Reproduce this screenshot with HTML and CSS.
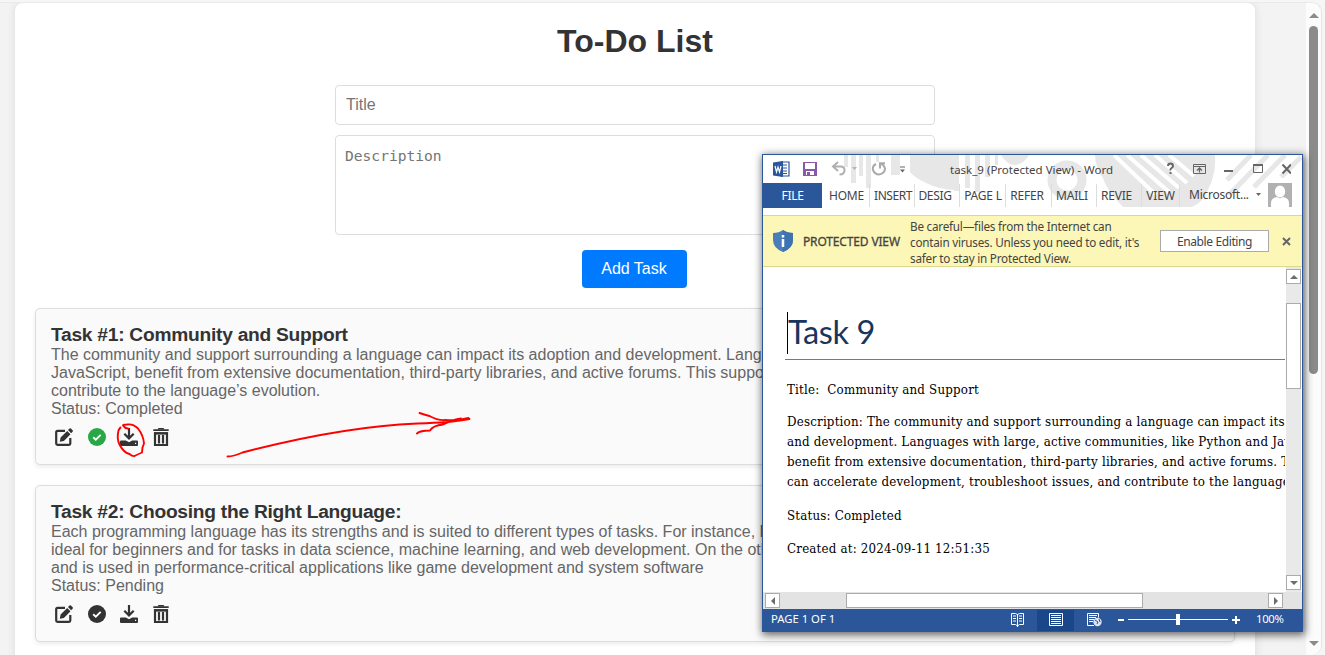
FILE: index.html
```html
<!DOCTYPE html>
<html lang="en">
<head>
<meta charset="utf-8">
<title>To-Do List</title>
<link rel="stylesheet" href="styles.css">
</head>
<body>
<svg width="0" height="0" class="defs">
  <symbol id="edit" viewBox="0 0 18 18"><path d="M10 2.900H2.500Q1.200 2.900 1.200 4.200V15.600Q1.200 16.900 2.500 16.900H14Q15.300 16.900 15.300 15.600V10" fill="none" stroke="currentColor" stroke-width="2.200"/><path d="M4.800 13.700l.8-4.200L12.200 2.900l3.300 3.300-6.600 6.700zM13 2.100l1.500-1.500q.7-.7 1.400 0l1.700 1.700q.7.7 0 1.400l-1.500 1.500z" fill="currentColor"/></symbol>
  <symbol id="check" viewBox="0 0 18 18"><circle cx="9" cy="9" r="9" fill="currentColor"/><path d="M5.200 9.200l2.600 2.400 4.900-4.700" fill="none" stroke="#fff" stroke-width="1.900"/></symbol>
  <symbol id="download" viewBox="0 0 18 18"><path d="M9 0v10M4.300 5.700L9 10.400l4.700-4.700" fill="none" stroke="currentColor" stroke-width="2.200"/><path d="M1 12.500h4.800L9 14.300 12.200 12.500H17q1 0 1 1v3.500q0 1-1 1H1q-1 0-1-1v-3.500q0-1 1-1z" fill="currentColor"/><path d="M15 15.300h1.200" stroke="#fafafa" stroke-width="1.200"/></symbol>
  <symbol id="trash" viewBox="0 0 16 18"><path d="M.3 2.100H15.700" stroke="currentColor" stroke-width="1.800"/><path d="M4.500 1.500L5.500 0h5l1 1.500z" fill="currentColor"/><path d="M2 5.300V17H14V5.300zM6 7v8.500M10 7v8.500" fill="none" stroke="currentColor" stroke-width="2.200"/><path d="M1 4.300H15V6.200H1z" fill="currentColor"/></symbol>
</svg>

<div class="browser">
  <div class="viewport">
    <main class="container">
      <h1>To-Do List</h1>
      <form class="form">
        <input class="field" type="text" placeholder="Title">
        <textarea class="field area" placeholder="Description"></textarea>
        <button class="add" type="button">Add Task</button>
      </form>
      <section class="task">
        <h3>Task #1: Community and Support</h3>
        <p>The community and support surrounding a language can impact its adoption and development. Languages<br>JavaScript, benefit from extensive documentation, third-party libraries, and active forums. This support<br>contribute to the language’s evolution.</p>
        <p>Status: Completed</p>
        <div class="actions"><svg class="ic"><use href="#edit"/></svg><svg class="ic done"><use href="#check"/></svg><svg class="ic"><use href="#download"/></svg><svg class="ic bin"><use href="#trash"/></svg></div>
      </section>
      <section class="task">
        <h3 class="wide">Task #2: Choosing the Right Language:</h3>
        <p>Each programming language has its strengths and is suited to different types of tasks. For instance, Python<br>ideal for beginners and for tasks in data science, machine learning, and web development. On the other<br>and is used in performance-critical applications like game development and system software</p>
        <p>Status: Pending</p>
        <div class="actions"><svg class="ic"><use href="#edit"/></svg><svg class="ic"><use href="#check"/></svg><svg class="ic"><use href="#download"/></svg><svg class="ic bin"><use href="#trash"/></svg></div>
      </section>
    </main>
    <div class="page-scroll"><i class="tri up"></i><div class="page-thumb"></div><i class="tri down"></i></div>
  </div>
</div>

<svg class="ink" viewBox="0 0 1325 655"><g fill="none" stroke="#f00" stroke-width="1.900" stroke-linecap="round" stroke-linejoin="round"><path d="M120.500 427.500q-1 1-2 3q-2 8 1 14q4 8 10 9.500q3 2.500 5 2q4-2 7.500-3.500l.5-5l1.500-4q-.5-8-6-15q-5-5-11-4q-6 0-3 2q1 2 4 2"/><path d="M227.500 456.500q6 0 15-4q100-26 175-29q35-1 52-4.500M419.500 413q6 2 10 3q9 5 16 4q12 1 23-2M417 433.500q3-3 13-3q3-5 13-6q10-5 18-6"/></g></svg>

<div class="word">
  <svg class="pattern" viewBox="0 0 539 61"><g fill="#e7e7e7"><path d="M81 0h4v12h-4zM88 0h5v28h-5zM96 0h4v21h-4zM103 0h5v33h-5zM113 0h3v7h-3zM128 0h9v20h-9zM147 0h44v35q-16-1-28-7q-11-5-16-11zM191 0h5v36h-5zM202 0h5v33h-5zM212 0h5v37h-5zM222 0h5v22h-5zM232 0h3v10h-3zM238 0q6 10 14 10t14-10zM332 0H452q2 24-13 45q-7 7-12 7H360q-17-18-20-29q-7-8-8-23z"/></g><circle cx="304" cy="25" r="15" fill="none" stroke="#e7e7e7" stroke-width="9"/><path d="M351 0l42 40M364 0l42 37M378 0l38 33M392 0l32 28M406 0l25 21" stroke="#fff" stroke-width="4"/><g stroke="#e7e7e7" stroke-width="5"><path d="M464 25L488 0M466 40L505 0M491 32L522 0M518 22L538 2"/></g></svg>
  <div class="titlebar">
    <svg class="qat" viewBox="0 0 150 18"><path d="M8 2h8v14H8z" fill="#fff" stroke="#2b579a" stroke-width="1.200"/><path d="M10 5h4M10 8h4M10 11h4M10 13.500h4" stroke="#2b579a"/><path d="M0 2.500L10 1v16L0 15.500z" fill="#2b579a"/><path d="M2 6l1.500 6L5 7l1.500 5L8 6" fill="none" stroke="#fff" stroke-width="1.200"/><path d="M30 2h14v14H30z" fill="#8b57a8"/><path d="M32 3h10v6H32zM33 11h8v4H33z" fill="#fff"/><path d="M34 12h3v3h-3z" fill="#8b57a8"/><path d="M65 2l-5 4.500 5 4.500M60.500 6.500h7q4 0 4 3.500q0 4.500-5 4.500" fill="none" stroke="#b0b0b0" stroke-width="2"/><path d="M79 7h5l-2.500 3z" fill="#b5b5b5"/><path d="M103 4q-4 2-3 6q2 4.500 6 4.500q6-1 6-6q-1-4-5-5M107 8.500V3.200h5" fill="none" stroke="#aaa" stroke-width="2"/><path d="M127 7h5" stroke="#666"/><path d="M127 9.500h5l-2.500 3z" fill="#666"/></svg>
    <span class="caption">task_9 (Protected View) - Word</span>
    <svg class="controls" viewBox="0 0 126 18"><path d="M3 6q0-2.500 2.500-2.500T8 6q0 1.500-1.500 2.200T5.500 10.500M5.500 12v2" fill="none" stroke="#666" stroke-width="1.900"/><path d="M28.500 4.500h12v9h-12zM28.500 6.500h12" fill="none" stroke="#666"/><path d="M34.500 12.500V8M32 10.500l2.500-2.500 2.500 2.500" fill="none" stroke="#666" stroke-width="1.300"/><path d="M59 11h9" stroke="#666" stroke-width="2"/><path d="M88.500 4.500h9v8h-9z" fill="none" stroke="#666"/><path d="M88 5h10" stroke="#666" stroke-width="2"/><path d="M117.500 4.500l8.500 9M126 4.500l-8.500 9" stroke="#666" stroke-width="2"/></svg>
  </div>
  <div class="tabs">
    <span class="file">FILE</span><span class="tab t1">HOME</span><span class="tab t2">INSERT</span><span class="tab t3">DESIG</span><span class="tab t4">PAGE L</span><span class="tab t5">REFER</span><span class="tab t6">MAILI</span><span class="tab t7">REVIE</span><span class="tab t8">VIEW</span><span class="account">Microsoft...</span>
    <svg class="avatar" viewBox="0 0 36 24"><path d="M0 10h5l-2.500 3z" fill="#666"/><path d="M12 0h24v24H12z" fill="#b1b1b1"/><path d="M24 2.500a4.800 5.500 0 0 1 0 12a4.800 5.500 0 0 1 0-12M15 24v-4q0-5 6-6l3 1.500 3-1.500q6 1 6 6v4z" fill="#fff"/></svg>
  </div>
  <div class="notice">
    <svg class="shield" viewBox="0 0 20 22"><path d="M10 0q4 3 10 3v7q0 8-10 12Q0 18 0 10V3q6 0 10-3z" fill="#4a7ebb"/><path d="M10 0q4 3 10 3v7q0 8-10 12z" fill="#3f73b0"/><path d="M10 5v2.500M10 9v8" stroke="#fff" stroke-width="2.500"/></svg>
    <span class="pv">PROTECTED VIEW</span>
    <p class="warn">Be careful—files from the Internet can<br>contain viruses. Unless you need to edit, it's<br>safer to stay in Protected View.</p>
    <span class="enable">Enable Editing</span>
    <svg class="close" viewBox="0 0 9 9"><path d="M1 1l7 7M8 1L1 8" stroke="#666" stroke-width="2"/></svg>
  </div>
  <div class="body">
    <div class="doc">
      <div class="heading"><i class="caret"></i><span>Task 9</span></div>
      <p class="l1">Title:&nbsp; Community and Support</p>
      <p class="l2">Description: The community and support surrounding a language can impact its<br>and development. Languages with large, active communities, like Python and Jav<br>benefit from extensive documentation, third-party libraries, and active forums. T<br>can accelerate development, troubleshoot issues, and contribute to the language</p>
      <p class="l3">Status: Completed</p>
      <p class="l4">Created at: 2024-09-11 12:51:35</p>
    </div>
    <div class="vs"><div class="sb"><i class="tri up"></i></div><div class="vthumb"></div><div class="sb"><i class="tri down"></i></div></div>
  </div>
  <div class="hs"><div class="sb"><i class="tri left"></i></div><div class="hthumb"></div><div class="sb"><i class="tri right"></i></div></div>
  <div class="status"><span class="pg">PAGE 1 OF 1</span>
    <svg class="views" viewBox="0 0 232 23"><path d="M28 1h37v21H28z" fill="#19478a"/><g fill="none" stroke="#fff"><path d="M2.500 4.500h4l2 1 2-1h4v11h-4l-2 1.500-2-1.500h-4zM8.500 5v13M4 7h3M4 9.500h3M4 12h3M10 7h3M10 9.500h3M10 12h3"/><path d="M40.500 4.500h13v12h-13zM42 6.500h10M42 8.500h10M42 10.500h10M42 12.500h10M42 14.500h10"/><path d="M85 16.500h-6.500v-12h11v4M80 6.500h8M80 8.500h7M80 10.500h5M80 12.500h4"/></g><circle cx="88.500" cy="13" r="4.200" fill="#dbe4f0"/><path d="M86 11l3 2-1 2M90 10l1 3" stroke="#2b579a" fill="none"/><path d="M109 11h6" stroke="#fff" stroke-width="2"/><path d="M119 10.500h100" stroke="#fff"/><path d="M167 5h4v11h-4z" fill="#fff"/><path d="M223 11h8M227 7v8" stroke="#fff" stroke-width="2"/></svg>
    <span class="zoom">100%</span></div>
</div>
</body>
</html>
```
FILE: styles.css
```css
* { box-sizing: border-box; }
body { margin: 0; width: 1325px; height: 655px; overflow: hidden; background: #f6f6f6; font-family: "Liberation Sans", Arial, sans-serif; }
h1, h3, p { margin: 0; }
svg { display: block; flex: none; }
.defs { position: absolute; }
.browser { height: 655px; padding: 2px 3px 0 0; }
.viewport { display: flex; height: 653px; border-top: 1px solid #eaeaea; border-right: 1px solid #e4e4e4; border-radius: 0 10px 10px 0; background: #f3f3f3; overflow: hidden; padding-left: 15px; }
.container { width: 1240px; height: 720px; flex: none; background: #fff; border-radius: 8px; padding: 20px; box-shadow: 0 0 10px rgba(0,0,0,.1); }
h1 { font-size: 32px; line-height: 36px; text-align: center; color: #333; }
.form { width: 600px; margin: 26px auto 20px; display: flex; flex-direction: column; align-items: center; }
.field { display: block; width: 600px; height: 40px; border: 1px solid #ddd; border-radius: 4px; padding: 10px; font-family: "Liberation Sans", Arial, sans-serif; font-size: 16px; margin: 0 0 10px; background: #fff; }
.field::placeholder { color: #757575; }
.area { height: 100px; resize: none; margin-bottom: 15px; font-family: "DejaVu Sans Mono", monospace; font-size: 14.6px; padding: 11px 9px; }
.add { width: 105px; height: 38px; margin-right: 2px; border: 0; border-radius: 4px; background: #007bff; color: #fff; font-size: 16px; font-family: "Liberation Sans", Arial, sans-serif; padding: 0; }
.task { height: 157px; border: 1px solid #ddd; border-radius: 5px; background: #fafafa; padding: 15px; margin-bottom: 20px; box-shadow: 0 2px 4px rgba(0,0,0,.08); white-space: nowrap; overflow: hidden; }
.task h3 { font-size: 19.2px; line-height: 22px; color: #333; letter-spacing: -.26px; }
.task p { font-size: 16px; line-height: 18px; color: #666; }
.actions { display: flex; padding: 10px 0 0 4px; gap: 14.6px; color: #333; }
.ic { width: 18px; height: 18px; }
.bin { width: 16px; }
.done { color: #28a745; }
.page-scroll { margin-left: auto; width: 15px; background: #fcfcfc; display: flex; flex-direction: column; align-items: center; padding: 10px 0 9px; }
.page-thumb { width: 9px; height: 348px; margin-top: 8px; border-radius: 5px; background: #8b8b8b; }
.page-scroll .down { margin-top: auto; }
.tri { display: block; border: 4px solid transparent; width: 0; height: 0; }
.up { border-top: 0; border-bottom: 4px solid #6d6d6d; }
.down { border-bottom: 0; border-top: 4px solid #6d6d6d; }
.left { border-left: 0; border-right: 4px solid #6d6d6d; }
.right { border-right: 0; border-left: 4px solid #6d6d6d; }
.page-scroll .tri { border-left-width: 5px; border-right-width: 5px; }
.page-scroll .up { border-bottom: 5px solid #8b8b8b; }
.page-scroll .down { border-top: 5px solid #8b8b8b; }
.ink { position: absolute; left: 0; top: 0; width: 1325px; height: 655px; }

.word { position: absolute; left: 762px; top: 154px; width: 541px; height: 478px; border: 1px solid #2b579a; background: #fff; box-shadow: 1px 2px 8px 1px rgba(0,0,0,.6); font-family: "Noto Sans", "Open Sans", sans-serif; font-size: 12px; color: #444; white-space: nowrap; }
.pattern { position: absolute; left: 0; top: 0; width: 539px; height: 61px; }
.titlebar { position: relative; height: 28px; display: flex; padding: 5px 11px 0 10px; }
.qat { width: 150px; height: 18px; }
.caption { margin-left: 27px; line-height: 19px; width: 163px; font-size: 11.5px; }
.controls { width: 126px; height: 18px; margin-left: auto; }
.tabs { position: relative; height: 32px; display: flex; line-height: 25px; }
.file { background: #2b579a; color: #fff; width: 59px; height: 25px; text-align: center; letter-spacing: -.3px; }
.tab { border-right: 1px solid #ddd; height: 23px; text-align: center; margin-top: 1px; line-height: 24px; letter-spacing: -.2px; }
.t1 { width: 48px; padding-left: 2px; } .t2 { width: 45px; padding-left: 2px; letter-spacing: -.45px; } .t3 { width: 45px; padding-right: 4px; letter-spacing: -.35px; } .t4 { width: 46px; padding-left: 1px; } .t5 { width: 46px; padding-right: 3px; } .t6 { width: 45px; padding-right: 4px; } .t7 { width: 45px; padding-right: 5px; } .t8 { width: 38px; }
.account { margin-left: 9px; line-height: 24px; letter-spacing: -.25px; }
.avatar { width: 36px; height: 24px; margin-left: auto; margin-right: 10px; }
.notice { position: relative; height: 52px; background: #fcf7b6; border-top: 1px solid #dcd98e; border-bottom: 1px solid #dcd98e; display: flex; align-items: center; padding: 0 11px 0 10px; }
.shield { width: 20px; height: 22px; }
.pv { flex: none; width: 117px; padding-left: 10px; -webkit-text-stroke: .3px #444; letter-spacing: -.15px; }
.warn { flex: none; line-height: 16px; width: 250px; padding-top: 2px; font-size: 11.7px; letter-spacing: -.22px; }
.enable { background: #fff; border: 1px solid #ababab; width: 109px; height: 22px; line-height: 22px; text-align: center; letter-spacing: -.38px; }
.close { width: 9px; height: 9px; margin-left: auto; }
.body { display: flex; height: 325px; }
.doc { width: 522px; padding: 45px 0 0 24px; overflow: hidden; font-family: "DejaVu Serif Condensed", "DejaVu Serif", serif; font-stretch: condensed; font-size: 13.2px; letter-spacing: .19px; line-height: 20px; color: #000; }
.heading { display: flex; height: 48px; margin-left: -2px; padding-left: 2px; border-bottom: 1px solid #4f81bd; font-family: Lato, sans-serif; color: #17365d; font-size: 32.5px; letter-spacing: -.4px; line-height: 40px; }
.caret { width: 1px; height: 42px; background: #000; }
.l1 { margin-top: 20px; } .l2 { margin-top: 12px; } .l3 { margin-top: 14px; } .l4 { margin-top: 13px; }
.vs { margin-left: 1px; width: 15px; background: #e9e9e9; display: flex; flex-direction: column; padding-top: 2px; }
.sb { width: 15px; height: 15px; flex: none; background: #fff; border: 1px solid #ababab; display: flex; align-items: center; justify-content: center; }
.vthumb { height: 86px; margin: 19px 0 186px; background: #fff; border: 1px solid #ababab; }
.hs { height: 17px; display: flex; background: #e3e3e3; padding: 1px 19px 0 2px; }
.hthumb { height: 15px; width: 297px; margin-left: 66px; margin-right: auto; background: #fff; border: 1px solid #ababab; }
.status { height: 23px; background: #2b579a; color: #fff; display: flex; line-height: 20px; font-size: 11.3px; }
.pg { width: 246px; padding-left: 8px; }
.views { width: 232px; height: 23px; }
.zoom { margin-left: 15px; letter-spacing: -.3px; }
```
